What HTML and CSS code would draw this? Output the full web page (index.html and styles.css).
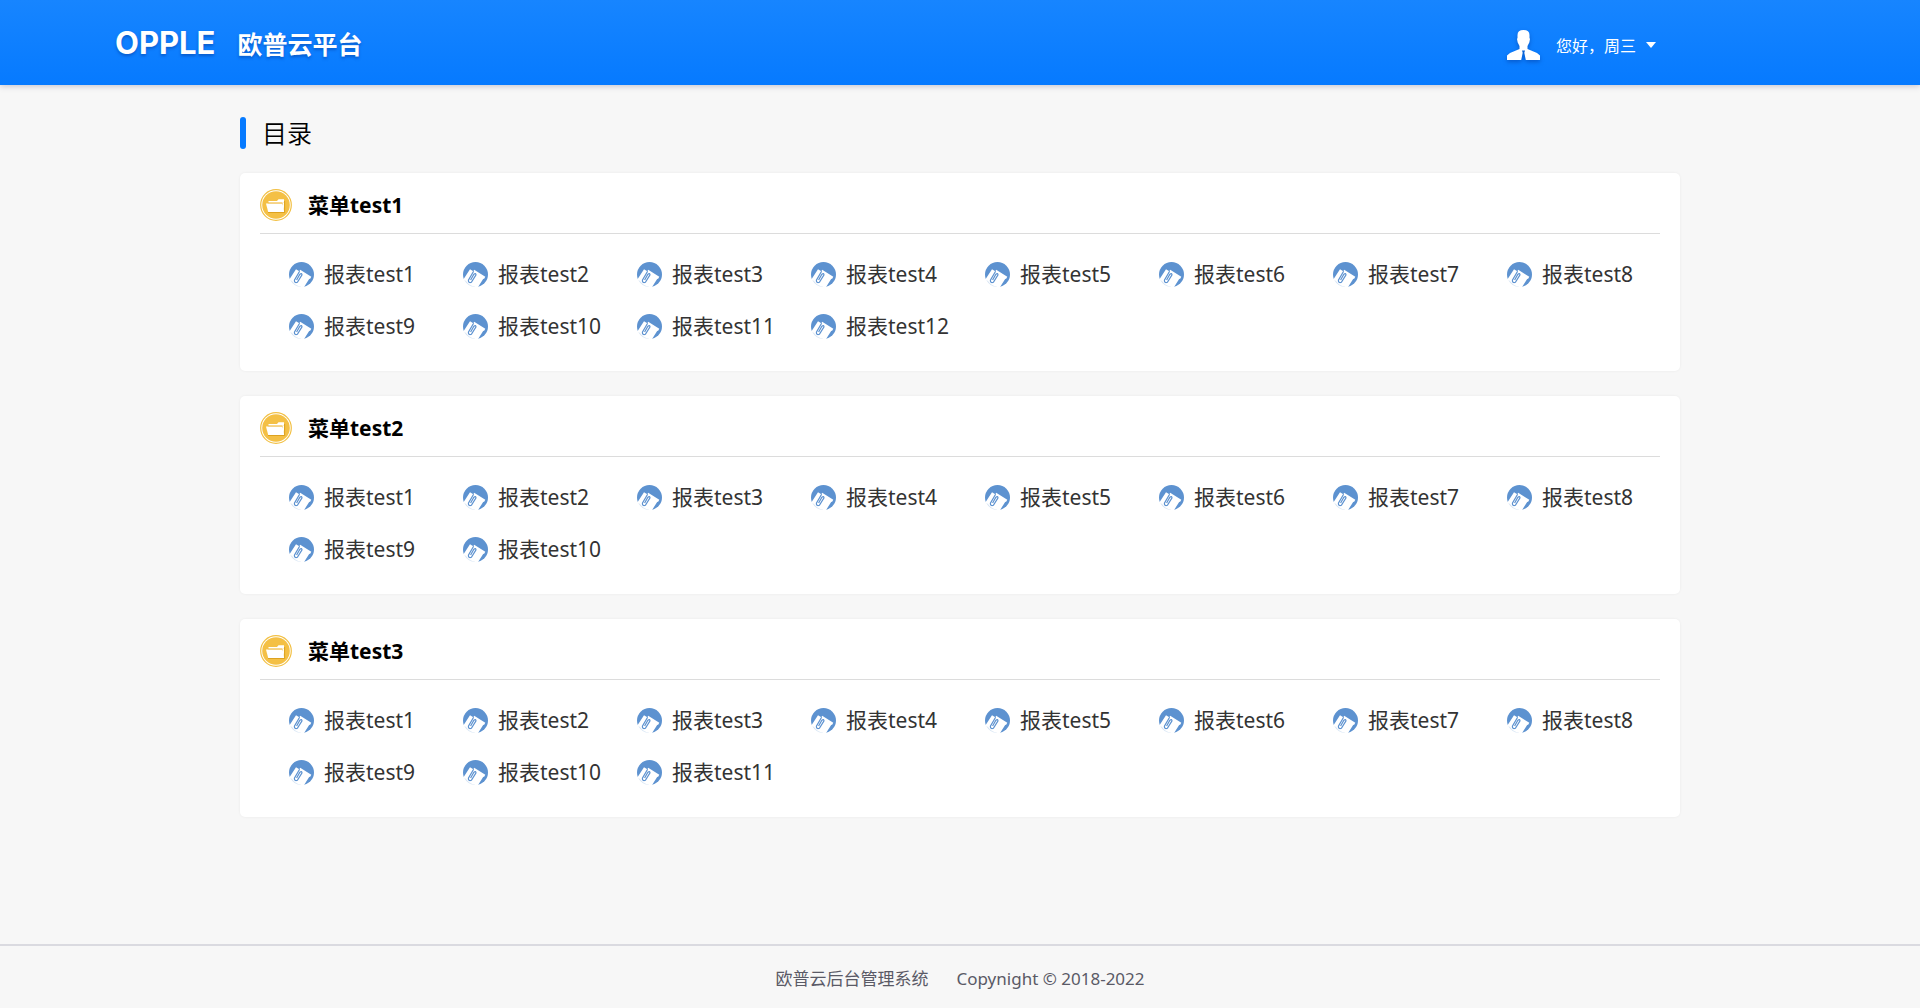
FILE: index.html
```html
<!DOCTYPE html>
<html lang="zh-CN">
<head>
<meta charset="utf-8">
<meta name="viewport" content="width=device-width, initial-scale=1">
<title>欧普云平台</title>
<link rel="stylesheet" href="styles.css">
</head>
<body>
<svg class="defs" width="0" height="0" aria-hidden="true">
  <symbol id="folder" viewBox="0 0 32 32">
    <circle cx="16" cy="16" r="15.3" fill="#fff" stroke="#f2c044" stroke-width="1.2"/>
    <circle cx="16" cy="16" r="13.8" fill="#f4c045"/>
    <path d="M8.500 13.500V12H17L18.500 10.200H24V13.500Z" fill="#fff"/>
    <path d="M22 13.500H24V22.500Z" fill="#fff"/>
    <path d="M6 14.600H22.500L24.200 23H8.200Z" fill="#fff"/>
    <path d="M8 14.100H22.300L22.700 15.500" fill="none" stroke="#e9b548" stroke-width=".5"/>
    <path d="M8 23.500H24.600V12" fill="none" stroke="#d79b16" stroke-width=".8"/>
  </symbol>
  <symbol id="report" viewBox="0 0 25 25">
    <circle cx="12.5" cy="12.5" r="12.5" fill="#5d92d0"/>
    <path d="M0 18L7 7.300L10.300 9.200L11.200 7.800L22.300 14.800L21 17L20.300 16.700L15 25.200H0Z" fill="#fff"/>
    <path d="M1.300 18Q4.500 24 11.500 25L12 24.800Q6 23.500 3 19Z" fill="#5d92d0" opacity=".25"/>
    <path d="M10.600 9.200L5.400 18.200Q5.200 21.300 8.400 20.300L13 12.800Q12.700 10.800 10.900 12.200L7.600 18" fill="none" stroke="#5d92d0" stroke-width="1.2"/>
  </symbol>
</svg>

<header class="topbar">
  <a class="brand" href="#"><span class="brand-mark">OPPLE</span><span class="brand-name">欧普云平台</span></a>
  <button class="user" type="button">
    <svg class="avatar" viewBox="0 0 33 30" aria-hidden="true"><path d="M10.500 5Q10.500 0 16.500 0Q22.500 0 22.500 5V8L23 9L22.300 12.500L20.500 16V19L30 23L33 25.500V30H18.800L17.300 22.800L18 20.500H15L15.700 22.800L14.200 30H0V25.500L3 23L12.500 19V16L10.700 12.500L10 9L10.500 8Z" fill="#fff"/></svg>
    <span>您好，周三</span>
    <svg class="caret" viewBox="0 0 10 6" aria-hidden="true"><path d="M0 0H10L5 6Z" fill="#fff"/></svg>
  </button>
</header>

<main class="content">
  <h1 class="title">目录</h1>

  <section class="card">
    <h2 class="card-head"><svg class="folder" aria-hidden="true"><use href="#folder"/></svg>菜单test1</h2>
    <ul class="reports">
      <li><a href="#"><svg class="icon" aria-hidden="true"><use href="#report"/></svg>报表test1</a></li>
      <li><a href="#"><svg class="icon" aria-hidden="true"><use href="#report"/></svg>报表test2</a></li>
      <li><a href="#"><svg class="icon" aria-hidden="true"><use href="#report"/></svg>报表test3</a></li>
      <li><a href="#"><svg class="icon" aria-hidden="true"><use href="#report"/></svg>报表test4</a></li>
      <li><a href="#"><svg class="icon" aria-hidden="true"><use href="#report"/></svg>报表test5</a></li>
      <li><a href="#"><svg class="icon" aria-hidden="true"><use href="#report"/></svg>报表test6</a></li>
      <li><a href="#"><svg class="icon" aria-hidden="true"><use href="#report"/></svg>报表test7</a></li>
      <li><a href="#"><svg class="icon" aria-hidden="true"><use href="#report"/></svg>报表test8</a></li>
      <li><a href="#"><svg class="icon" aria-hidden="true"><use href="#report"/></svg>报表test9</a></li>
      <li><a href="#"><svg class="icon" aria-hidden="true"><use href="#report"/></svg>报表test10</a></li>
      <li><a href="#"><svg class="icon" aria-hidden="true"><use href="#report"/></svg>报表test11</a></li>
      <li><a href="#"><svg class="icon" aria-hidden="true"><use href="#report"/></svg>报表test12</a></li>
    </ul>
  </section>

  <section class="card">
    <h2 class="card-head"><svg class="folder" aria-hidden="true"><use href="#folder"/></svg>菜单test2</h2>
    <ul class="reports">
      <li><a href="#"><svg class="icon" aria-hidden="true"><use href="#report"/></svg>报表test1</a></li>
      <li><a href="#"><svg class="icon" aria-hidden="true"><use href="#report"/></svg>报表test2</a></li>
      <li><a href="#"><svg class="icon" aria-hidden="true"><use href="#report"/></svg>报表test3</a></li>
      <li><a href="#"><svg class="icon" aria-hidden="true"><use href="#report"/></svg>报表test4</a></li>
      <li><a href="#"><svg class="icon" aria-hidden="true"><use href="#report"/></svg>报表test5</a></li>
      <li><a href="#"><svg class="icon" aria-hidden="true"><use href="#report"/></svg>报表test6</a></li>
      <li><a href="#"><svg class="icon" aria-hidden="true"><use href="#report"/></svg>报表test7</a></li>
      <li><a href="#"><svg class="icon" aria-hidden="true"><use href="#report"/></svg>报表test8</a></li>
      <li><a href="#"><svg class="icon" aria-hidden="true"><use href="#report"/></svg>报表test9</a></li>
      <li><a href="#"><svg class="icon" aria-hidden="true"><use href="#report"/></svg>报表test10</a></li>
    </ul>
  </section>

  <section class="card">
    <h2 class="card-head"><svg class="folder" aria-hidden="true"><use href="#folder"/></svg>菜单test3</h2>
    <ul class="reports">
      <li><a href="#"><svg class="icon" aria-hidden="true"><use href="#report"/></svg>报表test1</a></li>
      <li><a href="#"><svg class="icon" aria-hidden="true"><use href="#report"/></svg>报表test2</a></li>
      <li><a href="#"><svg class="icon" aria-hidden="true"><use href="#report"/></svg>报表test3</a></li>
      <li><a href="#"><svg class="icon" aria-hidden="true"><use href="#report"/></svg>报表test4</a></li>
      <li><a href="#"><svg class="icon" aria-hidden="true"><use href="#report"/></svg>报表test5</a></li>
      <li><a href="#"><svg class="icon" aria-hidden="true"><use href="#report"/></svg>报表test6</a></li>
      <li><a href="#"><svg class="icon" aria-hidden="true"><use href="#report"/></svg>报表test7</a></li>
      <li><a href="#"><svg class="icon" aria-hidden="true"><use href="#report"/></svg>报表test8</a></li>
      <li><a href="#"><svg class="icon" aria-hidden="true"><use href="#report"/></svg>报表test9</a></li>
      <li><a href="#"><svg class="icon" aria-hidden="true"><use href="#report"/></svg>报表test10</a></li>
      <li><a href="#"><svg class="icon" aria-hidden="true"><use href="#report"/></svg>报表test11</a></li>
    </ul>
  </section>
</main>

<footer class="footer">
  <span>欧普云后台管理系统</span>
  <span>Copynight © 2018-2022</span>
</footer>
</body>
</html>
```
FILE: styles.css
```css
* {
  box-sizing: border-box;
}

body {
  margin: 0;
  min-height: 100vh;
  display: flex;
  flex-direction: column;
  background: #f7f7f7;
  color: #333;
  font-family: "Noto Sans", "Noto Sans CJK SC", sans-serif;
}

.defs {
  position: absolute;
}

a {
  color: inherit;
  text-decoration: none;
}

.topbar {
  display: flex;
  align-items: center;
  justify-content: space-between;
  height: 85px;
  padding: 0 264px 0 115px;
  background: linear-gradient(#1785ff, #067aff);
  box-shadow: 0 1px 6px rgba(30, 30, 80, 0.25);
  color: #fff;
}

.brand {
  display: flex;
  align-items: center;
  gap: 22px;
  line-height: 32px;
  font-weight: 700;
  text-shadow: 0 2px 3px rgba(0, 40, 130, 0.4);
}

.brand-mark {
  font-family: Inter, sans-serif;
  font-size: 31px;
  font-weight: 700;
}

.brand-name {
  font-family: "Noto Sans CJK SC", sans-serif;
  font-size: 25px;
}

.user {
  display: flex;
  align-items: center;
  padding: 5px 0 0;
  border: 0;
  background: none;
  color: #fff;
  font: 16px/24px "Noto Sans CJK SC", sans-serif;
  cursor: pointer;
}

.avatar {
  width: 33px;
  height: 30px;
  margin-right: 16px;
  filter: drop-shadow(0 2px 2px rgba(0, 40, 130, 0.4));
}

.caret {
  width: 10px;
  height: 6px;
  margin-left: 10px;
}

.content {
  flex: 1;
  padding: 32px 12.5% 0;
}

.title {
  display: flex;
  align-items: center;
  gap: 16px;
  margin: 0 0 24px;
  font-size: 25px;
  font-weight: 350;
  line-height: 32px;
  color: #000;
}

.title::before {
  content: "";
  width: 6px;
  height: 32px;
  border-radius: 3px;
  background: #067aff;
}

.card {
  margin-bottom: 25px;
  padding: 0 20px;
  border-radius: 5px;
  background: #fff;
  box-shadow: 0 0 3px rgba(0, 0, 0, 0.06);
}

.card-head {
  display: flex;
  align-items: center;
  gap: 16px;
  height: 61px;
  margin: 0;
  padding-top: 4px;
  border-bottom: 1px solid #dcdcdc;
  color: #000;
  font-size: 21px;
  line-height: 25px;
  font-weight: 700;
}

.folder {
  width: 32px;
  height: 32px;
}

.reports {
  display: grid;
  grid-template-columns: repeat(8, 1fr);
  margin: 0;
  padding: 15px 4px 18px;
  list-style: none;
}

.reports a {
  display: flex;
  gap: 10px;
  padding: 13px 0 14px 25px;
  font-size: 21px;
  line-height: 25px;
  white-space: nowrap;
}

.icon {
  flex: none;
  width: 25px;
  height: 25px;
}

.footer {
  display: flex;
  justify-content: center;
  gap: 28px;
  padding: 20px 0 17px;
  border-top: 2px solid #dadae0;
  color: #5a5a66;
  font-size: 17px;
  line-height: 25px;
}
```
